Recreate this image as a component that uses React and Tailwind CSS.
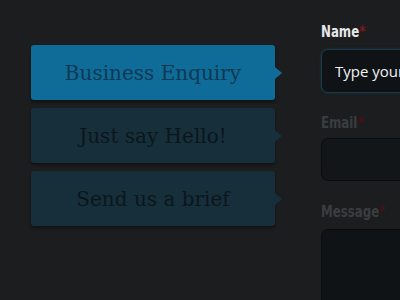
export default function App() {
  const tabs = [
    { label: "Business Enquiry", active: true },
    { label: "Just say Hello!", active: false },
    { label: "Send us a brief", active: false },
  ];
  const labelFont = { fontFamily: '"DejaVu Sans Condensed", "DejaVu Sans", sans-serif' };
  return (
    <div className="w-[400px] h-[300px] overflow-hidden bg-[#1b1d1e] flex items-start">
      <div className="pl-[31px] pt-[45px] flex flex-col gap-[8px] w-[321px] shrink-0">
        {tabs.map((t) => (
          <div key={t.label} className="relative w-[244px] h-[55px] shrink-0">
            <div
              className={`w-full h-full rounded-[3px] flex items-center justify-center text-[20px] ${
                t.active
                  ? "bg-[#0f6c99] text-[#0d3954] shadow-[0_2px_3px_rgba(0,0,0,0.5)]"
                  : "bg-[#172f3b] text-[#0b161c] shadow-[0_2px_3px_rgba(0,0,0,0.4)]"
              }`}
              style={{ fontFamily: '"DejaVu Serif", serif' }}
            >
              {t.label}
            </div>
            <div
              className={`absolute right-[-7px] top-1/2 -translate-y-1/2 w-0 h-0 border-y-[6px] border-y-transparent border-l-[7px] ${
                t.active ? "border-l-[#0f6c99]" : "border-l-[#172f3b]"
              }`}
            />
          </div>
        ))}
      </div>
      <div className="block pt-[24px] shrink-0 w-[200px]" style={labelFont}>
        <div className="h-4 text-[16px] leading-4 text-[#e8e8e8] font-bold">
          <span className="inline-block origin-left scale-x-[0.82] whitespace-nowrap">
            Name<span className="text-[#7c1628]">*</span>
          </span>
        </div>
        <div className="mt-[9px] h-[44px] rounded-[7px] bg-[#101316] border border-[#1c3a4a] shadow-[0_0_3px_rgba(30,80,110,0.45)] flex items-center pl-[13px] overflow-hidden">
          <span className="text-[15px] text-[#f2f2f2] whitespace-nowrap" style={{ fontFamily: '"Open Sans", "DejaVu Sans", sans-serif' }}>
            Type your name
          </span>
        </div>
        <div className="mt-[22px] h-4 text-[16px] leading-4 text-[#3a3d40] font-bold">
          <span className="inline-block origin-left scale-x-[0.82] whitespace-nowrap">
            Email<span className="text-[#4a0f1a]">*</span>
          </span>
        </div>
        <div className="mt-[7px] h-[43px] rounded-[7px] bg-[#131619] border border-[#0a0b0c]" />
        <div className="mt-[23px] h-4 text-[16px] leading-4 text-[#3a3d40] font-bold">
          <span className="inline-block origin-left scale-x-[0.82] whitespace-nowrap">
            Message<span className="text-[#4a0f1a]">*</span>
          </span>
        </div>
        <div className="mt-[9px] h-[100px] rounded-[7px] bg-[#101316] border border-[#0a0b0c]" />
      </div>
    </div>
  );
}
